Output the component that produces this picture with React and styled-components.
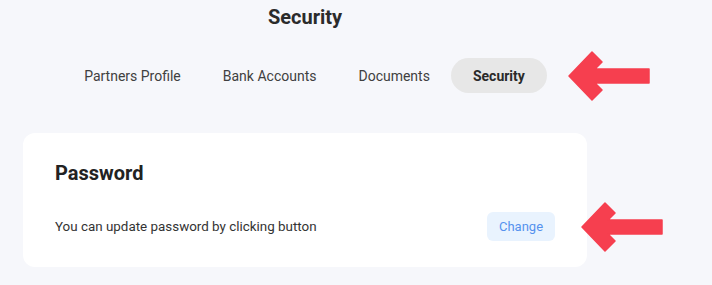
import React from "react";
import styled, { createGlobalStyle } from "styled-components";

const Global = createGlobalStyle`
  html, body { margin: 0; padding: 0; background: #f6f7fb; }
  body { font-family: Roboto, "Noto Sans", Arial, sans-serif; -webkit-font-smoothing: antialiased; }
`;

const Page = styled.div`
  padding: 5px 0 0 23px;
`;

const Column = styled.div`
  width: 564px;
  display: flex;
  flex-direction: column;
  align-items: center;
`;

const Title = styled.h1`
  margin: 0;
  font-size: 20px;
  line-height: 24px;
  font-weight: 700;
  color: #2b2b2b;
`;

const Tabs = styled.nav`
  position: relative;
  margin-top: 29px;
  display: flex;
  align-items: center;
`;

const Tab = styled.button`
  border: none;
  height: 35px;
  padding: 0 ${(p) => (p.$active ? 22 : 21)}px;
  border-radius: 18px;
  font-family: inherit;
  font-size: 14px;
  font-weight: ${(p) => (p.$active ? 700 : 400)};
  color: ${(p) => (p.$active ? "#2a2a2a" : "#404040")};
  background: ${(p) => (p.$active ? "#e7e7e7" : "transparent")};
  cursor: pointer;
`;

const Card = styled.section`
  align-self: stretch;
  margin-top: 40px;
  background: #ffffff;
  border-radius: 12px;
  padding: 28px 32px 26px;
`;

const CardTitle = styled.h2`
  margin: 0;
  font-size: 20px;
  line-height: 24px;
  font-weight: 700;
  color: #222;
`;

const Row = styled.div`
  position: relative;
  margin-top: 27px;
  display: flex;
  align-items: center;
  justify-content: space-between;
`;

const Text = styled.p`
  margin: 0;
  font-size: 13.4px;
  color: #333;
`;

const ChangeButton = styled.button`
  border: none;
  width: 68px;
  height: 29px;
  border-radius: 6px;
  background: #e9f3fe;
  color: #5592ee;
  font-family: inherit;
  font-size: 13px;
  cursor: pointer;
`;

const ArrowWrap = styled.div`
  position: absolute;
  top: 50%;
  left: calc(100% + ${(p) => p.$offset}px);
  transform: translateY(-50%);
  width: 82px;
  height: 52px;
  line-height: 0;
`;

const Arrow = ({ offset }) => (
  <ArrowWrap $offset={offset}>
    <svg width="82" height="52" viewBox="0 0 82 52">
      <polygon
        points="1,26 24,2 34,12 27,19 81,19 81,33 27,33 34,40 24,50"
        fill="#f63f4f"
        stroke="#f63f4f"
        strokeWidth="1.5"
        strokeLinejoin="round"
      />
    </svg>
  </ArrowWrap>
);

export default function App() {
  return (
    <>
      <Global />
      <Page>
        <Column>
          <Title>Security</Title>
          <Tabs>
            <Tab>Partners Profile</Tab>
            <Tab>Bank Accounts</Tab>
            <Tab>Documents</Tab>
            <Tab $active>Security</Tab>
            <Arrow offset={21} />
          </Tabs>
          <Card>
            <CardTitle>Password</CardTitle>
            <Row>
              <Text>You can update password by clicking button</Text>
              <ChangeButton>Change</ChangeButton>
              <Arrow offset={26} />
            </Row>
          </Card>
        </Column>
      </Page>
    </>
  );
}
